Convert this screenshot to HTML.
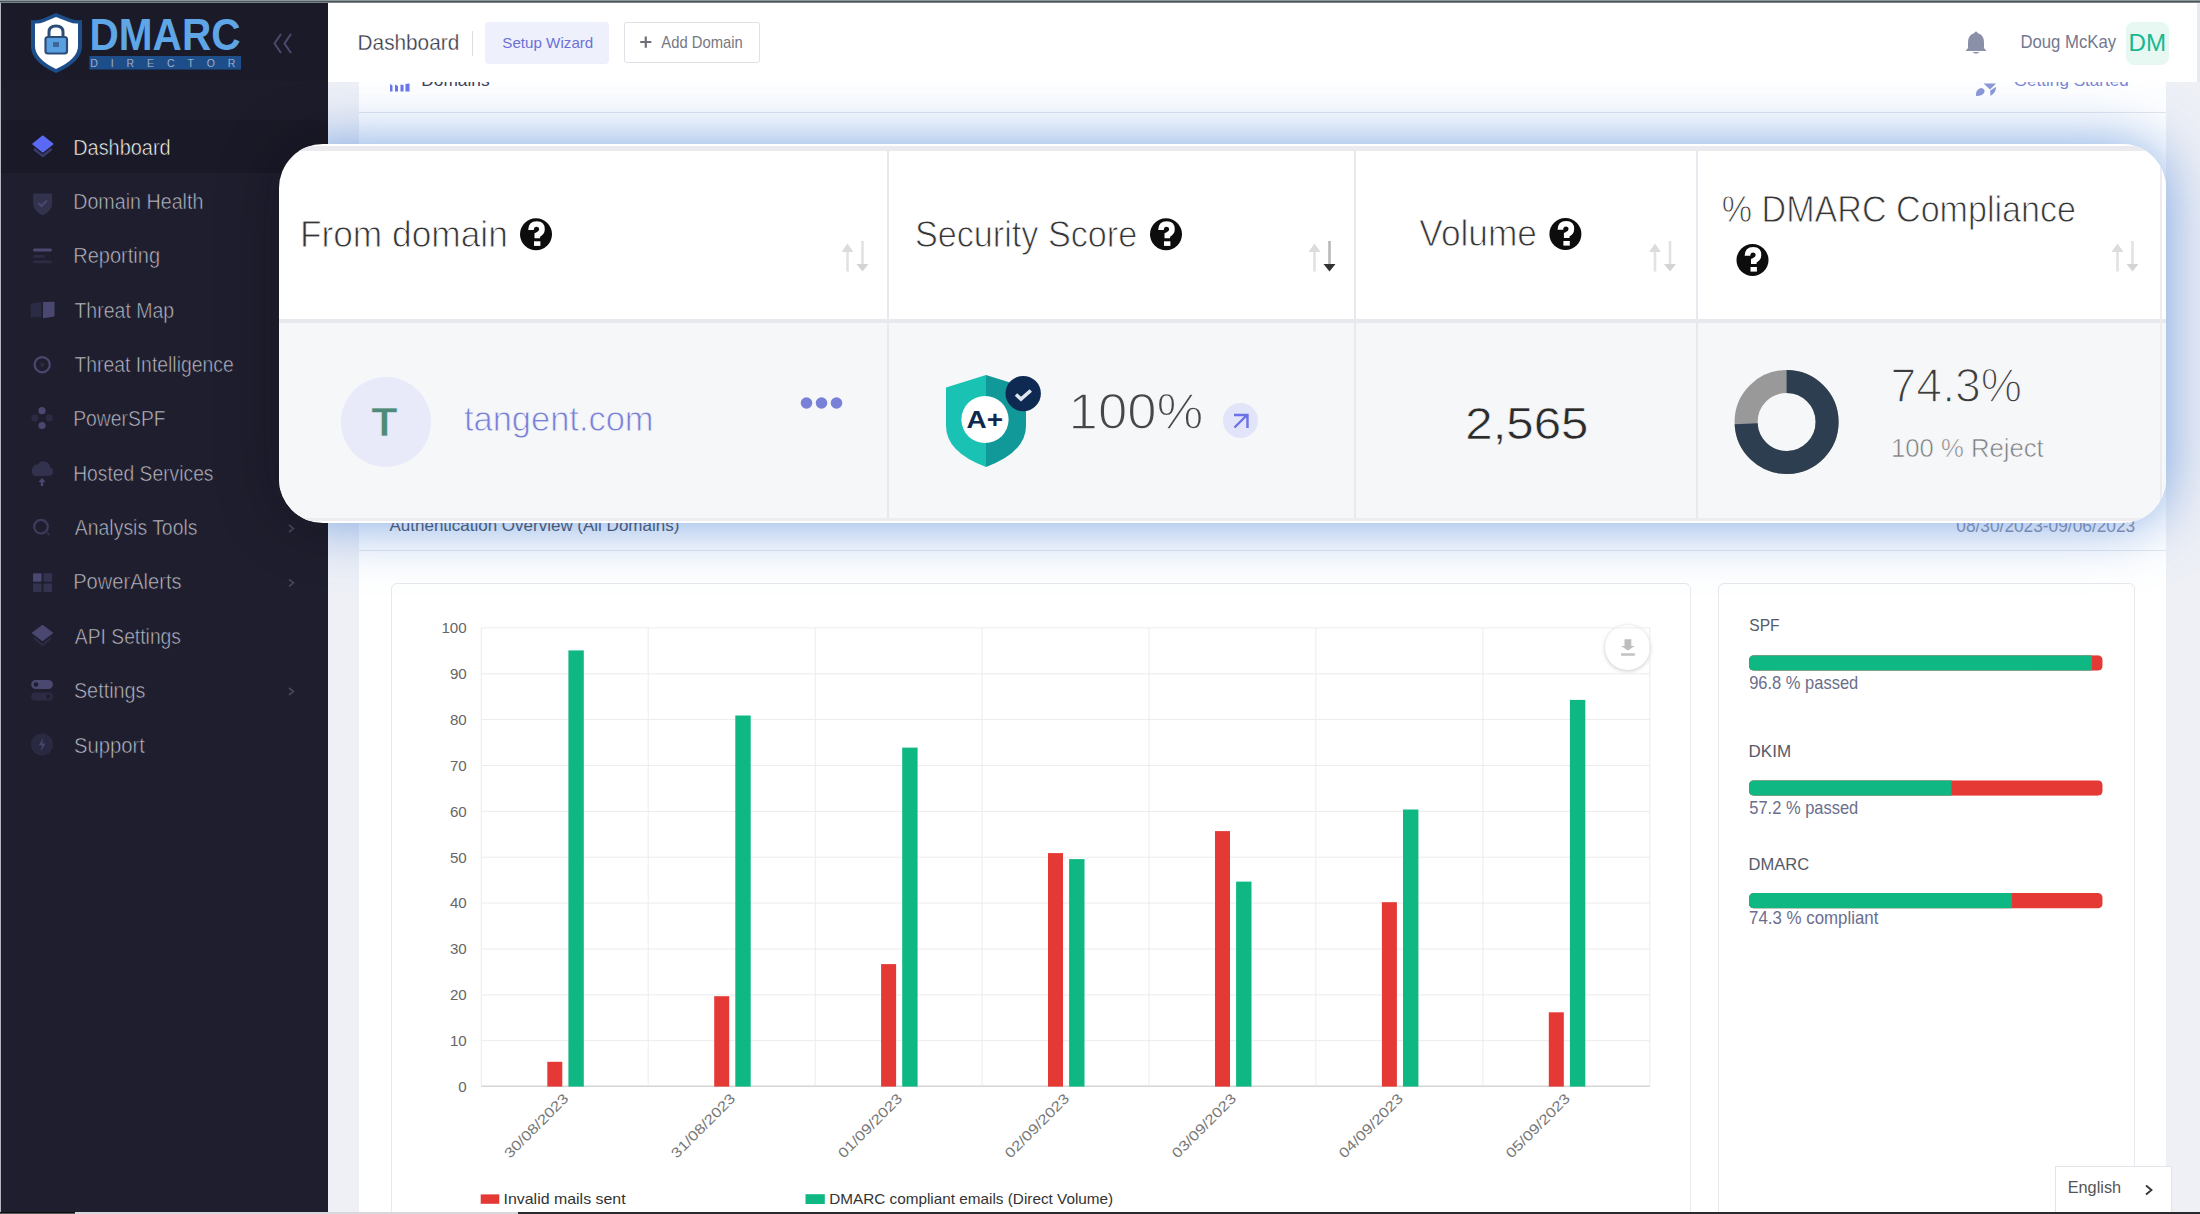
<!DOCTYPE html>
<html><head><meta charset="utf-8"><style>
html,body{margin:0;padding:0;}
body{width:2200px;height:1214px;position:relative;overflow:hidden;background:#eef0f6;font-family:"Liberation Sans",sans-serif;}
.a{position:absolute;}
svg{position:absolute;left:0;top:0;overflow:visible}
</style></head><body>
<!-- frame strips -->
<div class="a" style="left:0;top:0;width:2200px;height:1px;background:#8d9699"></div>
<div class="a" style="left:0;top:1px;width:2200px;height:1px;background:#4d575b"></div>
<div class="a" style="left:0;top:2px;width:2200px;height:1px;background:#7a8387"></div>
<div class="a" style="left:0;top:3px;width:1px;height:1211px;background:#b4b4bc"></div>
<!-- sidebar -->
<div class="a" style="left:1px;top:3px;width:327px;height:1209px;background:#1f1e2e"></div>
<div class="a" style="left:1px;top:3px;width:327px;height:78px;background:#1b1a28"></div>
<div class="a" style="left:1px;top:81px;width:327px;height:39px;background:#1d1c2b"></div>
<div class="a" style="left:1px;top:120px;width:327px;height:53px;background:#1a1927"></div>
<!-- main card -->
<div class="a" style="left:358.5px;top:70px;width:1807.5px;height:1142px;background:#fff"></div>
<svg width="2200" height="1214" viewBox="0 0 2200 1214"><text x="389.5" y="531.1" font-size="16.72" fill="#41444f" font-weight="400" font-family="Liberation Sans" textLength="289.8" lengthAdjust="spacingAndGlyphs" >Authentication Overview (All Domains)</text>
<text x="1956.3" y="532.3" font-size="17.44" fill="#878ca8" font-weight="400" font-family="Liberation Sans" textLength="178.9" lengthAdjust="spacingAndGlyphs" >08/30/2023-09/06/2023</text>
<text x="421.3" y="85.6" font-size="16.72" fill="#3b4058" font-weight="400" font-family="Liberation Sans" textLength="68.3" lengthAdjust="spacingAndGlyphs" >Domains</text>
<text x="2013.7" y="85.6" font-size="16.72" fill="#7b86d6" font-weight="400" font-family="Liberation Sans" textLength="115.2" lengthAdjust="spacingAndGlyphs" >Getting Started</text>
<path d="M390 91.5 L390 84 L392.5 85.5 L392.5 91.5 Z M395 91.5 L395 84.5 L398 86 L398 91.5 Z M400.5 91.5 L400.5 84.5 L403.5 85 L403.5 91.5 Z M405.5 91.5 L405.5 84 L409.5 83.5 L409.5 91.5 Z" fill="#6a74f0"/>
<path d="M1976 96 Q1975.5 89 1981 88 Q1985 88.5 1984.5 92 Q1983 96 1976 96 Z" fill="#8a98d8"/>
<path d="M1983.5 83.5 L1996 83.5 L1990 89.5 Z" fill="#8a98d8"/>
<path d="M1996 87 Q1996.5 92 1990.5 96 L1990.2 90.5 Z" fill="#8a98d8"/>
</svg>
<!-- header -->
<div class="a" style="left:328px;top:3px;width:1869px;height:79px;background:#fff"></div>
<div class="a" style="left:2197px;top:3px;width:3px;height:79px;background:#e9eaef"></div>
<div class="a" style="left:471.5px;top:30.5px;width:1px;height:25px;background:#dcdce2"></div>
<div class="a" style="left:485.3px;top:22px;width:124px;height:41.5px;background:#eef0fc;border-radius:4px"></div>
<div class="a" style="left:623.5px;top:22.4px;width:134px;height:38.5px;border:1px solid #e0e0e6;border-radius:3px;background:#fff"></div>
<div class="a" style="left:2125.8px;top:22px;width:43px;height:43px;background:#e6f8f1;border-radius:8px"></div>
<div class="a" style="left:358.5px;top:112px;width:1807.5px;height:1px;background:#e3e6ee"></div>
<div class="a" style="left:358.5px;top:550px;width:1807.5px;height:1px;background:#e3e6ee"></div>
<div class="a" style="left:390.5px;top:583px;width:1298.5px;height:640px;border:1px solid #e8e8ee;border-radius:6px"></div>
<div class="a" style="left:1717.5px;top:583px;width:415.5px;height:640px;border:1px solid #e8e8ee;border-radius:6px"></div>
<div class="a" style="left:2055.2px;top:1166.2px;width:114.5px;height:60px;border:1px solid #e3e3e8;background:#fff"></div>
<div style="position:absolute;left:1605px;top:625px;width:45px;height:45px;border-radius:50%;background:#fff;box-shadow:0 1px 4px rgba(0,0,0,0.22)"></div>
<svg width="2200" height="1214" viewBox="0 0 2200 1214">
<text x="73.2" y="154.6" font-size="21.22" fill="#ffffff" font-weight="400" font-family="Liberation Sans" textLength="97.4" lengthAdjust="spacingAndGlyphs" stroke="#1a1927" stroke-width="0.6" paint-order="normal">Dashboard</text>
<text x="73.2" y="208.9" font-size="21.22" fill="#bdbdca" font-weight="400" font-family="Liberation Sans" textLength="130.2" lengthAdjust="spacingAndGlyphs" stroke="#1f1e2e" stroke-width="0.6" paint-order="normal">Domain Health</text>
<text x="73.2" y="263.3" font-size="21.22" fill="#bdbdca" font-weight="400" font-family="Liberation Sans" textLength="86.9" lengthAdjust="spacingAndGlyphs" stroke="#1f1e2e" stroke-width="0.6" paint-order="normal">Reporting</text>
<text x="74.4" y="317.6" font-size="21.22" fill="#bdbdca" font-weight="400" font-family="Liberation Sans" textLength="99.8" lengthAdjust="spacingAndGlyphs" stroke="#1f1e2e" stroke-width="0.6" paint-order="normal">Threat Map</text>
<text x="74.4" y="372.0" font-size="21.22" fill="#bdbdca" font-weight="400" font-family="Liberation Sans" textLength="159.3" lengthAdjust="spacingAndGlyphs" stroke="#1f1e2e" stroke-width="0.6" paint-order="normal">Threat Intelligence</text>
<text x="73.2" y="426.4" font-size="21.22" fill="#bdbdca" font-weight="400" font-family="Liberation Sans" textLength="92.4" lengthAdjust="spacingAndGlyphs" stroke="#1f1e2e" stroke-width="0.6" paint-order="normal">PowerSPF</text>
<text x="73.2" y="480.7" font-size="21.22" fill="#bdbdca" font-weight="400" font-family="Liberation Sans" textLength="140.3" lengthAdjust="spacingAndGlyphs" stroke="#1f1e2e" stroke-width="0.6" paint-order="normal">Hosted Services</text>
<text x="74.8" y="535.0" font-size="21.22" fill="#bdbdca" font-weight="400" font-family="Liberation Sans" textLength="122.7" lengthAdjust="spacingAndGlyphs" stroke="#1f1e2e" stroke-width="0.6" paint-order="normal">Analysis Tools</text>
<text x="73.2" y="589.4" font-size="21.22" fill="#bdbdca" font-weight="400" font-family="Liberation Sans" textLength="108.4" lengthAdjust="spacingAndGlyphs" stroke="#1f1e2e" stroke-width="0.6" paint-order="normal">PowerAlerts</text>
<text x="74.8" y="643.8" font-size="21.22" fill="#bdbdca" font-weight="400" font-family="Liberation Sans" textLength="106.2" lengthAdjust="spacingAndGlyphs" stroke="#1f1e2e" stroke-width="0.6" paint-order="normal">API Settings</text>
<text x="73.9" y="698.1" font-size="21.22" fill="#bdbdca" font-weight="400" font-family="Liberation Sans" textLength="71.6" lengthAdjust="spacingAndGlyphs" stroke="#1f1e2e" stroke-width="0.6" paint-order="normal">Settings</text>
<text x="73.9" y="752.5" font-size="21.22" fill="#bdbdca" font-weight="400" font-family="Liberation Sans" textLength="71.1" lengthAdjust="spacingAndGlyphs" stroke="#1f1e2e" stroke-width="0.6" paint-order="normal">Support</text>
<path d="M289 525.0 L293.5 528.5 L289 532.0" stroke="#48475e" stroke-width="1.6" fill="none"/>
<path d="M289 579.3 L293.5 582.8 L289 586.3" stroke="#48475e" stroke-width="1.6" fill="none"/>
<path d="M289 688.0 L293.5 691.5 L289 695.0" stroke="#48475e" stroke-width="1.6" fill="none"/>
<text x="357.6" y="49.7" font-size="22.67" fill="#383b4a" font-weight="400" font-family="Liberation Sans" textLength="101.6" lengthAdjust="spacingAndGlyphs" stroke="#ffffff" stroke-width="0.3" paint-order="normal">Dashboard</text>
<text x="502.3" y="48.0" font-size="15.41" fill="#6d70d6" font-weight="400" font-family="Liberation Sans" textLength="91.0" lengthAdjust="spacingAndGlyphs" >Setup Wizard</text>
<text x="661.3" y="48.0" font-size="15.70" fill="#77777f" font-weight="400" font-family="Liberation Sans" textLength="81.4" lengthAdjust="spacingAndGlyphs" >Add Domain</text>
<text x="2020.4" y="48.0" font-size="17.44" fill="#737890" font-weight="400" font-family="Liberation Sans" textLength="95.8" lengthAdjust="spacingAndGlyphs" >Doug McKay</text>
<text x="2128.5" y="50.7" font-size="23.98" fill="#17b890" font-weight="400" font-family="Liberation Sans" textLength="37.5" lengthAdjust="spacingAndGlyphs" >DM</text>
<line x1="481.3" y1="627.9" x2="1649.8" y2="627.9" stroke="#ececec" stroke-width="1"/>
<text x="466.7" y="633.1" font-size="15.12" fill="#666666" font-weight="400" font-family="Liberation Sans" text-anchor="end" >100</text>
<line x1="481.3" y1="673.8" x2="1649.8" y2="673.8" stroke="#ececec" stroke-width="1"/>
<text x="466.7" y="679.0" font-size="15.12" fill="#666666" font-weight="400" font-family="Liberation Sans" text-anchor="end" >90</text>
<line x1="481.3" y1="719.6" x2="1649.8" y2="719.6" stroke="#ececec" stroke-width="1"/>
<text x="466.7" y="724.8" font-size="15.12" fill="#666666" font-weight="400" font-family="Liberation Sans" text-anchor="end" >80</text>
<line x1="481.3" y1="765.5" x2="1649.8" y2="765.5" stroke="#ececec" stroke-width="1"/>
<text x="466.7" y="770.7" font-size="15.12" fill="#666666" font-weight="400" font-family="Liberation Sans" text-anchor="end" >70</text>
<line x1="481.3" y1="811.4" x2="1649.8" y2="811.4" stroke="#ececec" stroke-width="1"/>
<text x="466.7" y="816.6" font-size="15.12" fill="#666666" font-weight="400" font-family="Liberation Sans" text-anchor="end" >60</text>
<line x1="481.3" y1="857.2" x2="1649.8" y2="857.2" stroke="#ececec" stroke-width="1"/>
<text x="466.7" y="862.5" font-size="15.12" fill="#666666" font-weight="400" font-family="Liberation Sans" text-anchor="end" >50</text>
<line x1="481.3" y1="903.1" x2="1649.8" y2="903.1" stroke="#ececec" stroke-width="1"/>
<text x="466.7" y="908.3" font-size="15.12" fill="#666666" font-weight="400" font-family="Liberation Sans" text-anchor="end" >40</text>
<line x1="481.3" y1="949.0" x2="1649.8" y2="949.0" stroke="#ececec" stroke-width="1"/>
<text x="466.7" y="954.2" font-size="15.12" fill="#666666" font-weight="400" font-family="Liberation Sans" text-anchor="end" >30</text>
<line x1="481.3" y1="994.9" x2="1649.8" y2="994.9" stroke="#ececec" stroke-width="1"/>
<text x="466.7" y="1000.1" font-size="15.12" fill="#666666" font-weight="400" font-family="Liberation Sans" text-anchor="end" >20</text>
<line x1="481.3" y1="1040.7" x2="1649.8" y2="1040.7" stroke="#ececec" stroke-width="1"/>
<text x="466.7" y="1045.9" font-size="15.12" fill="#666666" font-weight="400" font-family="Liberation Sans" text-anchor="end" >10</text>
<line x1="481.3" y1="1086.6" x2="1649.8" y2="1086.6" stroke="#ececec" stroke-width="1"/>
<text x="466.7" y="1091.8" font-size="15.12" fill="#666666" font-weight="400" font-family="Liberation Sans" text-anchor="end" >0</text>
<line x1="481.3" y1="627.9" x2="481.3" y2="1086.6" stroke="#ececec" stroke-width="1"/>
<line x1="648.2" y1="627.9" x2="648.2" y2="1086.6" stroke="#ececec" stroke-width="1"/>
<line x1="815.2" y1="627.9" x2="815.2" y2="1086.6" stroke="#ececec" stroke-width="1"/>
<line x1="982.1" y1="627.9" x2="982.1" y2="1086.6" stroke="#ececec" stroke-width="1"/>
<line x1="1149.0" y1="627.9" x2="1149.0" y2="1086.6" stroke="#ececec" stroke-width="1"/>
<line x1="1315.9" y1="627.9" x2="1315.9" y2="1086.6" stroke="#ececec" stroke-width="1"/>
<line x1="1482.9" y1="627.9" x2="1482.9" y2="1086.6" stroke="#ececec" stroke-width="1"/>
<line x1="1649.8" y1="627.9" x2="1649.8" y2="1086.6" stroke="#ececec" stroke-width="1"/>
<line x1="481.3" y1="1086.3" x2="1649.8" y2="1086.3" stroke="#d6d6d6" stroke-width="1.5"/>
<rect x="547.3" y="1061.8" width="15" height="24.8" fill="#e53935"/>
<rect x="568.4" y="650.4" width="15.4" height="436.2" fill="#0fb883"/>
<text x="0" y="0" font-size="14" fill="#777" font-family="Liberation Sans" text-anchor="end" textLength="84" lengthAdjust="spacingAndGlyphs" transform="translate(569.3,1099.5) rotate(-45)">30/08/2023</text>
<rect x="714.2" y="996.2" width="15" height="90.4" fill="#e53935"/>
<rect x="735.3" y="715.5" width="15.4" height="371.1" fill="#0fb883"/>
<text x="0" y="0" font-size="14" fill="#777" font-family="Liberation Sans" text-anchor="end" textLength="84" lengthAdjust="spacingAndGlyphs" transform="translate(736.2,1099.5) rotate(-45)">31/08/2023</text>
<rect x="881.1" y="964.1" width="15" height="122.5" fill="#e53935"/>
<rect x="902.2" y="747.6" width="15.4" height="339.0" fill="#0fb883"/>
<text x="0" y="0" font-size="14" fill="#777" font-family="Liberation Sans" text-anchor="end" textLength="84" lengthAdjust="spacingAndGlyphs" transform="translate(903.1,1099.5) rotate(-45)">01/09/2023</text>
<rect x="1048.0" y="853.1" width="15" height="233.5" fill="#e53935"/>
<rect x="1069.1" y="859.1" width="15.4" height="227.5" fill="#0fb883"/>
<text x="0" y="0" font-size="14" fill="#777" font-family="Liberation Sans" text-anchor="end" textLength="84" lengthAdjust="spacingAndGlyphs" transform="translate(1070.0,1099.5) rotate(-45)">02/09/2023</text>
<rect x="1215.0" y="831.1" width="15" height="255.5" fill="#e53935"/>
<rect x="1236.1" y="881.6" width="15.4" height="205.0" fill="#0fb883"/>
<text x="0" y="0" font-size="14" fill="#777" font-family="Liberation Sans" text-anchor="end" textLength="84" lengthAdjust="spacingAndGlyphs" transform="translate(1237.0,1099.5) rotate(-45)">03/09/2023</text>
<rect x="1381.9" y="902.2" width="15" height="184.4" fill="#e53935"/>
<rect x="1403.0" y="809.5" width="15.4" height="277.1" fill="#0fb883"/>
<text x="0" y="0" font-size="14" fill="#777" font-family="Liberation Sans" text-anchor="end" textLength="84" lengthAdjust="spacingAndGlyphs" transform="translate(1403.9,1099.5) rotate(-45)">04/09/2023</text>
<rect x="1548.8" y="1012.3" width="15" height="74.3" fill="#e53935"/>
<rect x="1569.9" y="699.9" width="15.4" height="386.7" fill="#0fb883"/>
<text x="0" y="0" font-size="14" fill="#777" font-family="Liberation Sans" text-anchor="end" textLength="84" lengthAdjust="spacingAndGlyphs" transform="translate(1570.8,1099.5) rotate(-45)">05/09/2023</text>
<rect x="480.7" y="1194.4" width="18.6" height="9.4" fill="#e53935"/>
<text x="503.5" y="1203.8" font-size="15.12" fill="#333333" font-weight="400" font-family="Liberation Sans" textLength="122.1" lengthAdjust="spacingAndGlyphs" >Invalid mails sent</text>
<rect x="805.5" y="1194.2" width="19.3" height="9.8" fill="#0fb883"/>
<text x="829.2" y="1204.0" font-size="15.12" fill="#333333" font-weight="400" font-family="Liberation Sans" textLength="284.0" lengthAdjust="spacingAndGlyphs" >DMARC compliant emails (Direct Volume)</text>
<text x="1749.3" y="631.4" font-size="17.15" fill="#555a66" font-weight="400" font-family="Liberation Sans" textLength="30.3" lengthAdjust="spacingAndGlyphs" >SPF</text>
<clipPath id="cpSPF"><rect x="1748.9" y="655.2" width="353.8" height="15.5" rx="5"/></clipPath>
<g clip-path="url(#cpSPF)"><rect x="1748.9" y="655.2" width="353.8" height="15.5" fill="#e53935"/><rect x="1748.9" y="655.2" width="343.1" height="15.5" fill="#0fb883"/></g>
<text x="1749.2" y="688.6" font-size="17.73" fill="#6a6e8c" font-weight="400" font-family="Liberation Sans" textLength="109.1" lengthAdjust="spacingAndGlyphs" >96.8 % passed</text>
<text x="1748.6" y="756.8" font-size="17.15" fill="#555a66" font-weight="400" font-family="Liberation Sans" textLength="42.5" lengthAdjust="spacingAndGlyphs" >DKIM</text>
<clipPath id="cpDKIM"><rect x="1748.9" y="780.3" width="353.8" height="15.5" rx="5"/></clipPath>
<g clip-path="url(#cpDKIM)"><rect x="1748.9" y="780.3" width="353.8" height="15.5" fill="#e53935"/><rect x="1748.9" y="780.3" width="202.6" height="15.5" fill="#0fb883"/></g>
<text x="1749.3" y="814.0" font-size="17.73" fill="#6a6e8c" font-weight="400" font-family="Liberation Sans" textLength="109.0" lengthAdjust="spacingAndGlyphs" >57.2 % passed</text>
<text x="1748.6" y="869.5" font-size="17.15" fill="#555a66" font-weight="400" font-family="Liberation Sans" textLength="60.5" lengthAdjust="spacingAndGlyphs" >DMARC</text>
<clipPath id="cpDMARC"><rect x="1748.9" y="893.0" width="353.8" height="15.5" rx="5"/></clipPath>
<g clip-path="url(#cpDMARC)"><rect x="1748.9" y="893.0" width="353.8" height="15.5" fill="#e53935"/><rect x="1748.9" y="893.0" width="263.1" height="15.5" fill="#0fb883"/></g>
<text x="1749.1" y="924.3" font-size="17.73" fill="#6a6e8c" font-weight="400" font-family="Liberation Sans" textLength="129.3" lengthAdjust="spacingAndGlyphs" >74.3 % compliant</text>
<text x="2067.7" y="1193.2" font-size="16.57" fill="#555555" font-weight="400" font-family="Liberation Sans" textLength="53.4" lengthAdjust="spacingAndGlyphs" >English</text>
<path d="M2146 1185.5 L2151.5 1190 L2146 1194.5" stroke="#333" stroke-width="1.8" fill="none"/>

<path d="M56 13 L71 19 Q78 21 82 20 L82 46 Q82 62 56 73 Q31 62 31 46 L31 20 Q35 21 42 19 Z" fill="#1d4e8a"/>
<path d="M56 17 L69 22 Q74 24 78 23.5 L78 46 Q78 59 56 69 Q35 59 35 46 L35 23.5 Q39 24 44 22 Z" fill="#ffffff"/>
<path d="M49 37 L49 32 Q49 26 56 26 Q63 26 63 32 L63 37" stroke="#2c4d7a" stroke-width="3" fill="none"/>
<rect x="45.5" y="37" width="21.5" height="16.5" rx="2.5" fill="#5aa0e0" stroke="#2c4d7a" stroke-width="2.2"/>
<rect x="53" y="42" width="6" height="5" fill="#2c4d7a" opacity="0.7"/>
<text x="89.5" y="50" font-size="43.5" fill="#5ea6e6" font-family="Liberation Sans" font-weight="700" textLength="151" lengthAdjust="spacingAndGlyphs">DMARC</text>
<rect x="89.5" y="56" width="151.5" height="13.5" fill="#1d4e8a"/>
<text x="90.3" y="67" font-size="10.5" fill="#b3bfd2" font-family="Liberation Sans" font-weight="400" textLength="145" lengthAdjust="spacing" stroke="#1d4e8a" stroke-width="0.15">DIRECTOR</text>
<path d="M281 34 L274.5 43.5 L281 53" stroke="#4b4a6e" stroke-width="2" fill="none"/>
<path d="M291 34 L284.5 43.5 L291 53" stroke="#4b4a6e" stroke-width="2" fill="none"/>

<path d="M42.8 136 L52.9 144 L42.8 152 L32.8 144 Z" fill="#5b6af5" stroke="#5b6af5" stroke-width="1.2" stroke-linejoin="round"/>
<path d="M34 149 L42.8 156 L51.6 149" stroke="#3b3a72" stroke-width="2.4" fill="none"/>
<path d="M33.2 193.5 L52 193.5 L52 204 Q52 211 42.6 215.5 Q33.2 211 33.2 204 Z" fill="#33324c"/>
<path d="M38.5 203 L41.5 206 L47 200.5" stroke="#4a4870" stroke-width="2" fill="none"/>
<rect x="33" y="248.4" width="19" height="3.2" rx="1.5" fill="#4a4870"/>
<rect x="33" y="255" width="12" height="2.8" rx="1.4" fill="#2c2b44"/>
<rect x="33" y="260.5" width="19" height="2.8" rx="1.4" fill="#2c2b44"/>
<path d="M30.7 303.5 L41.5 302 L41.5 317 L30.7 317.5 Z" fill="#2c2b44"/>
<path d="M43 302 L54.5 301.8 L54.5 316.5 L43 318.2 Z" fill="#4a4870"/>
<circle cx="42.2" cy="364.7" r="7.6" stroke="#4a4870" stroke-width="2.2" fill="none"/>
<circle cx="42.2" cy="364.7" r="2.2" fill="#2c2b44"/>
<circle cx="42" cy="410.7" r="3.6" fill="#4a4870"/>
<circle cx="42" cy="425.5" r="3.6" fill="#4a4870"/>
<circle cx="34.8" cy="418" r="3.4" fill="#2c2b44"/>
<circle cx="49.3" cy="418" r="3.4" fill="#2c2b44"/>
<path d="M36 476 Q31 476 32 469.5 Q33 464 38 464.5 Q40 460 45 461.5 Q50 463 50 467.5 Q54 468.5 53 473 Q52 476 48 476 Z" fill="#33324e"/>
<path d="M42 478 L45.5 482 L43.2 482 L43.2 486 L40.8 486 L40.8 482 L38.5 482 Z" fill="#4a4870"/>
<circle cx="41" cy="526.7" r="6.8" stroke="#3d3c5c" stroke-width="2.2" fill="none"/>
<path d="M46 531.5 L49.5 535" stroke="#2f2e48" stroke-width="2.2"/>
<rect x="33" y="573.2" width="8.6" height="8.6" rx="1" fill="#4a4870"/>
<rect x="43.5" y="573.2" width="8.6" height="8.6" rx="1" fill="#34334f"/>
<rect x="33" y="583.5" width="8.6" height="8.6" rx="1" fill="#34334f"/>
<rect x="43.5" y="583.5" width="8.6" height="8.6" rx="1" fill="#34334f"/>
<path d="M42.5 625.5 L52.5 633 L42.5 640.5 L32.5 633 Z" fill="#4a4870" stroke="#4a4870" stroke-width="1.2" stroke-linejoin="round"/>
<path d="M34 638 L42.5 645 L51 638" stroke="#2c2b44" stroke-width="2.2" fill="none"/>
<rect x="31.2" y="680" width="21.7" height="9" rx="4.5" fill="#4a4870"/>
<circle cx="36" cy="684.5" r="2.3" fill="#1f1e2e"/>
<rect x="31.2" y="692.5" width="21.7" height="8" rx="4" fill="#2c2b44"/>
<circle cx="48.2" cy="696.5" r="2.2" fill="#1f1e2e"/>
<circle cx="42" cy="744.4" r="11" fill="#2a2942"/>
<path d="M43.5 737.5 L38.8 745.2 L42.2 745.2 L40.5 751.5 L45.5 743.5 L42 743.5 Z" fill="#4a4870"/>

<path d="M640.2 42 L651.4 42 M645.8 36.5 L645.8 47.7" stroke="#707078" stroke-width="2.2"/>
<path d="M1976 31.5 Q1977.5 31.5 1977.5 33 Q1984 34.5 1984 42.5 L1984 48 L1986.5 51 L1965.5 51 L1968 48 L1968 42.5 Q1968 34.5 1974.5 33 Q1974.5 31.5 1976 31.5 Z" fill="#8a90a8"/>
<path d="M1972.5 52 Q1976 55.5 1979.5 52 Z" fill="#8a90a8"/>
<path d="M1624.5 639.3 L1631.3 639.3 L1631.3 646 L1634.8 646 L1627.9 650.5 L1621 646 L1624.5 646 Z" fill="#bdbdbd"/>
<rect x="1621" y="653.2" width="13.8" height="2.6" fill="#c4c4c4"/>
</svg>
<!-- bottom strip -->
<div class="a" style="left:0;top:1212px;width:75px;height:1px;background:#111"></div>
<div class="a" style="left:0;top:1213px;width:75px;height:1px;background:#555"></div>
<div class="a" style="left:75px;top:1212px;width:443px;height:2px;background:#d8d8dc"></div>
<div class="a" style="left:518px;top:1212px;width:1682px;height:2px;background:#2a2a2e"></div>
<!-- dark shadow on sidebar -->
<div class="a" style="left:1px;top:3px;width:327px;height:1209px;overflow:hidden">
  <div class="a" style="left:278px;top:141px;width:1887px;height:379px;border-radius:44px;box-shadow:0 0 60px 0 rgba(8,8,18,0.35)"></div>
</div>
<!-- glow -->
<div class="a" style="left:328px;top:82px;width:1872px;height:1130px;overflow:hidden">
  <div class="a" style="left:-49px;top:62px;width:1887px;height:379px;border-radius:44px;box-shadow:0 0 60px 0 rgba(80,135,215,0.76)"></div>
</div>
<!-- overlay -->
<div class="a" style="left:279px;top:144px;width:1887px;height:379px;border-radius:44px;background:#fff;overflow:hidden">
  <div class="a" style="left:0;top:2px;width:1887px;height:5px;background:#ebebef"></div>
  <div class="a" style="left:0;top:175px;width:1887px;height:4px;background:#e8e8ee"></div>
  <div class="a" style="left:0;top:179px;width:1887px;height:195px;background:#f6f7f9"></div>
  <div class="a" style="left:0;top:374px;width:1887px;height:3px;background:#ededf1"></div>
  <div class="a" style="left:608px;top:7px;width:2px;height:367px;background:#e8e8ee"></div>
  <div class="a" style="left:1075px;top:7px;width:2px;height:367px;background:#e8e8ee"></div>
  <div class="a" style="left:1417px;top:7px;width:2px;height:367px;background:#e8e8ee"></div>
  <div class="a" style="left:1881px;top:7px;width:2px;height:367px;background:#ececf0"></div>
  <div class="a" style="left:61.80000000000001px;top:232.7px;width:90px;height:90px;border-radius:50%;background:#e8eafa"></div>
  <svg width="1887" height="379" viewBox="0 0 1887 379">
  <text x="20.9" y="102.6" font-size="36.63" fill="#353535" font-weight="400" font-family="Liberation Sans" textLength="207.9" lengthAdjust="spacingAndGlyphs" stroke="#ffffff" stroke-width="0.9" paint-order="normal">From domain</text>
<text x="635.9" y="102.6" font-size="36.63" fill="#353535" font-weight="400" font-family="Liberation Sans" textLength="222.3" lengthAdjust="spacingAndGlyphs" stroke="#ffffff" stroke-width="0.9" paint-order="normal">Security Score</text>
<text x="1140.3" y="102.0" font-size="36.63" fill="#353535" font-weight="400" font-family="Liberation Sans" textLength="117.7" lengthAdjust="spacingAndGlyphs" stroke="#ffffff" stroke-width="0.9" paint-order="normal">Volume</text>
<text x="1442.8" y="77.6" font-size="36.63" fill="#353535" font-weight="400" font-family="Liberation Sans" textLength="354.2" lengthAdjust="spacingAndGlyphs" stroke="#ffffff" stroke-width="0.9" paint-order="normal">% DMARC Compliance</text>
<text x="92.2" y="292.4" font-size="40.99" fill="#4e8a78" font-weight="700" font-family="Liberation Sans" textLength="26.3" lengthAdjust="spacingAndGlyphs" stroke="#e8eafa" stroke-width="0.6">T</text>
<text x="184.9" y="286.8" font-size="34.88" fill="#7880d8" font-weight="400" font-family="Liberation Sans" textLength="189.7" lengthAdjust="spacingAndGlyphs" stroke="#f6f7f9" stroke-width="0.8" paint-order="normal">tangent.com</text>
<text x="789.6" y="285.0" font-size="50.87" fill="#474747" font-weight="400" font-family="Liberation Sans" textLength="134.9" lengthAdjust="spacingAndGlyphs" stroke="#f6f7f9" stroke-width="1.4" paint-order="normal">100%</text>
<text x="1186.3" y="295.0" font-size="44.48" fill="#2b2b2b" font-weight="400" font-family="Liberation Sans" textLength="123.2" lengthAdjust="spacingAndGlyphs" stroke="#f6f7f9" stroke-width="0.6" paint-order="normal">2,565</text>
<text x="1611.6" y="258.4" font-size="47.38" fill="#3c3c3c" font-weight="400" font-family="Liberation Sans" textLength="131.4" lengthAdjust="spacingAndGlyphs" stroke="#f6f7f9" stroke-width="1.4" paint-order="normal">74.3%</text>
<text x="1612.0" y="312.5" font-size="25.00" fill="#7a7a7a" font-weight="400" font-family="Liberation Sans" textLength="152.7" lengthAdjust="spacingAndGlyphs" stroke="#f6f7f9" stroke-width="0.6" paint-order="normal">100 % Reject</text>
<circle cx="257.0" cy="90.3" r="16" fill="#0d0d0d"/>
<path d="M252.0 86.1 Q252.0 80.0 257.8 80.0 Q263.0 80.0 263.0 85.3 Q263.0 89.1 258.3 91.1 L258.3 94.3" stroke="#fff" stroke-width="5.6" fill="none"/>
<rect x="255.0" y="97.3" width="6.4" height="4.6" fill="#fff"/>
<circle cx="887.0" cy="90.3" r="16" fill="#0d0d0d"/>
<path d="M882.0 86.1 Q882.0 80.0 887.8 80.0 Q893.0 80.0 893.0 85.3 Q893.0 89.1 888.3 91.1 L888.3 94.3" stroke="#fff" stroke-width="5.6" fill="none"/>
<rect x="885.0" y="97.3" width="6.4" height="4.6" fill="#fff"/>
<circle cx="1286.4" cy="90.0" r="16" fill="#0d0d0d"/>
<path d="M1281.4 85.8 Q1281.4 79.7 1287.2 79.7 Q1292.4 79.7 1292.4 85.0 Q1292.4 88.8 1287.7 90.8 L1287.7 94.0" stroke="#fff" stroke-width="5.6" fill="none"/>
<rect x="1284.4" y="97.0" width="6.4" height="4.6" fill="#fff"/>
<circle cx="1473.5" cy="116.0" r="16" fill="#0d0d0d"/>
<path d="M1468.5 111.8 Q1468.5 105.7 1474.3 105.7 Q1479.5 105.7 1479.5 111.0 Q1479.5 114.8 1474.8 116.8 L1474.8 120.0" stroke="#fff" stroke-width="5.6" fill="none"/>
<rect x="1471.5" y="123.0" width="6.4" height="4.6" fill="#fff"/>
<path d="M568.5 107.0 L568.5 127.6" stroke="#e2e2e2" stroke-width="2.6"/>
<path d="M562.5 108.0 L568.5 99.5 L574.5 108.0 Z" fill="#dcdcdc"/>
<path d="M583.5 97.0 L583.5 120.5" stroke="#e2e2e2" stroke-width="2.6"/>
<path d="M577.5 120.0 L589.5 120.0 L583.5 127.6 Z" fill="#d4d4d4"/>
<path d="M1035.5 107.0 L1035.5 127.6" stroke="#e2e2e2" stroke-width="2.6"/>
<path d="M1029.5 108.0 L1035.5 99.5 L1041.5 108.0 Z" fill="#dcdcdc"/>
<path d="M1050.5 97.0 L1050.5 120.5" stroke="#b8b8b8" stroke-width="2.6"/>
<path d="M1044.5 120.0 L1056.5 120.0 L1050.5 127.6 Z" fill="#333333"/>
<path d="M1376.0 107.0 L1376.0 127.6" stroke="#e2e2e2" stroke-width="2.6"/>
<path d="M1370.0 108.0 L1376.0 99.5 L1382.0 108.0 Z" fill="#dcdcdc"/>
<path d="M1391.0 97.0 L1391.0 120.5" stroke="#e2e2e2" stroke-width="2.6"/>
<path d="M1385.0 120.0 L1397.0 120.0 L1391.0 127.6 Z" fill="#d4d4d4"/>
<path d="M1838.5 107.0 L1838.5 127.6" stroke="#e2e2e2" stroke-width="2.6"/>
<path d="M1832.5 108.0 L1838.5 99.5 L1844.5 108.0 Z" fill="#dcdcdc"/>
<path d="M1853.5 97.0 L1853.5 120.5" stroke="#e2e2e2" stroke-width="2.6"/>
<path d="M1847.5 120.0 L1859.5 120.0 L1853.5 127.6 Z" fill="#d4d4d4"/>
<circle cx="527.5" cy="259" r="5.8" fill="#7880d8"/>
<circle cx="542.5" cy="259" r="5.8" fill="#7880d8"/>
<circle cx="557.5" cy="259" r="5.8" fill="#7880d8"/>
<g transform="translate(-279.0,-144.0)">
<path d="M986 375 L1026 387.5 L1026 426 Q1026 452 986 467 Z" fill="#11999a"/>
<path d="M986 375 L946 387.5 L946 426 Q946 452 986 467 Z" fill="#1ac2b3"/>
<circle cx="985" cy="419.5" r="23.6" fill="#fff"/>
<text x="966.5" y="427.8" font-size="24.6" font-weight="700" fill="#10284f" font-family="Liberation Sans" textLength="36.5" lengthAdjust="spacingAndGlyphs">A+</text>
<circle cx="1023.2" cy="393.6" r="17.7" fill="#0f2a52"/>
<path d="M1016 394.5 L1021 399 L1030.8 390.5" stroke="#dfe6ef" stroke-width="3.6" fill="none"/>
</g>
<circle cx="961.5" cy="276.5" r="17.5" fill="#e2e4fa"/>
<path d="M955.5 283.5 L967 272 M955 271 L968.5 271 L968.5 284" stroke="#6a72e6" stroke-width="2.4" fill="none"/>
<circle cx="1507.6" cy="278.0" r="40.5" stroke="#999999" stroke-width="23" fill="none"/>
<path d="M1507.6 237.5 A40.5 40.5 0 1 1 1467.14 279.78" stroke="#2c3e50" stroke-width="23" fill="none"/>

  </svg>
</div>
</body></html>
